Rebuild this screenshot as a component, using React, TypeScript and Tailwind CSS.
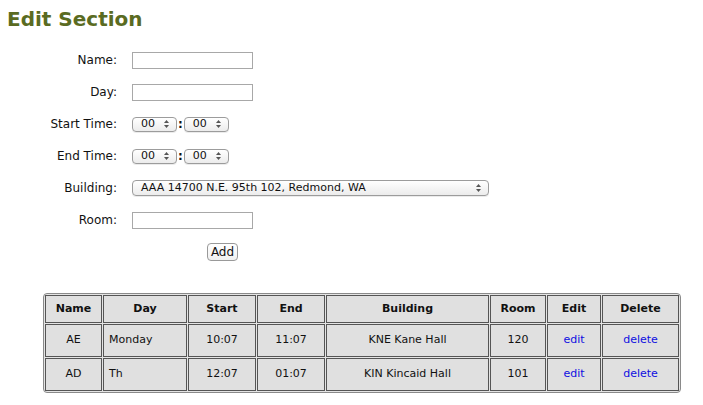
import React from 'react'

const font = { fontFamily: '"DejaVu Sans", Verdana, sans-serif' }

function Arrows() {
  return (
    <svg width="5" height="8" viewBox="0 0 5 8" className="ml-auto shrink-0">
      <polygon points="0,3 2.5,0 5,3" fill="#555" />
      <polygon points="0,5 2.5,8 5,5" fill="#555" />
    </svg>
  )
}

function FakeSelect({ value, className }: { value: string; className: string }) {
  return (
    <div
      className={
        'flex items-center rounded-[4px] border border-[#9c9c9c] bg-linear-to-b from-white to-[#ececec] pl-[8px] pr-[7px] text-[11px] text-[#111] shadow-[0_1px_0_rgba(0,0,0,0.08)] ' +
        className
      }
    >
      <span>{value}</span>
      <Arrows />
    </div>
  )
}

function TimePicker() {
  return (
    <div className="flex items-center">
      <FakeSelect value="00" className="h-[15px] w-[45px]" />
      <span className="mx-[1px] text-[12px] font-bold leading-none">:</span>
      <FakeSelect value="00" className="h-[15px] w-[45px]" />
    </div>
  )
}

function Row({ label, children }: { label: string; children: React.ReactNode }) {
  return (
    <div className="flex h-[32px] items-center">
      <div className="w-[118px] pr-[1px] text-right text-[12px] text-[#111]">{label}</div>
      <div className="ml-[14px]">{children}</div>
    </div>
  )
}

const TextBox = () => <div className="h-[17px] w-[121px] border border-[#a8a8a8] bg-white" />

const rows = [
  { name: 'AE', day: 'Monday', start: '10:07', end: '11:07', building: 'KNE Kane Hall', room: '120' },
  { name: 'AD', day: 'Th', start: '12:07', end: '01:07', building: 'KIN Kincaid Hall', room: '101' },
]

const cell = 'border border-[#555] bg-[#e0e0e0] text-center'

export default function App() {
  return (
    <div className="min-h-[405px] bg-white text-[#111]" style={font}>
      <h1 className="pl-[7px] pt-[6px] text-[20px] font-bold leading-[26px] text-[#5a6b22]">Edit Section</h1>

      <div className="mt-[12px]">
        <Row label="Name:">
          <TextBox />
        </Row>
        <Row label="Day:">
          <TextBox />
        </Row>
        <Row label="Start Time:">
          <TimePicker />
        </Row>
        <Row label="End Time:">
          <TimePicker />
        </Row>
        <Row label="Building:">
          <FakeSelect value="AAA 14700 N.E. 95th 102, Redmond, WA" className="h-[16px] w-[357px]" />
        </Row>
        <Row label="Room:">
          <TextBox />
        </Row>
        <div className="flex h-[32px] items-center pl-[207px]">
          <div className="flex h-[18px] w-[31px] items-center justify-center rounded-[4px] border border-[#999] bg-linear-to-b from-white to-[#f0f0f0] text-[12px]">
            Add
          </div>
        </div>
      </div>

      <div className="mt-[25px] pl-[43px]">
        <table className="border-separate border-spacing-[1px] rounded-[4px] border border-[#8a8a8a] bg-[#e4e4e4] text-[11px]">
          <thead>
            <tr className="h-[28px]">
              <th className={cell + ' w-[57px]'}>Name</th>
              <th className={cell + ' w-[84px]'}>Day</th>
              <th className={cell + ' w-[68px]'}>Start</th>
              <th className={cell + ' w-[68px]'}>End</th>
              <th className={cell + ' w-[163px]'}>Building</th>
              <th className={cell + ' w-[56px]'}>Room</th>
              <th className={cell + ' w-[54px]'}>Edit</th>
              <th className={cell + ' w-[77px]'}>Delete</th>
            </tr>
          </thead>
          <tbody>
            {rows.map((r) => (
              <tr key={r.name} className="h-[33px]">
                <td className={cell}>{r.name}</td>
                <td className={cell + ' !text-left pl-[5px]'}>{r.day}</td>
                <td className={cell}>{r.start}</td>
                <td className={cell}>{r.end}</td>
                <td className={cell}>{r.building}</td>
                <td className={cell}>{r.room}</td>
                <td className={cell}>
                  <a className="text-[#0f0fe0]">edit</a>
                </td>
                <td className={cell}>
                  <a className="text-[#0f0fe0]">delete</a>
                </td>
              </tr>
            ))}
          </tbody>
        </table>
      </div>
    </div>
  )
}
